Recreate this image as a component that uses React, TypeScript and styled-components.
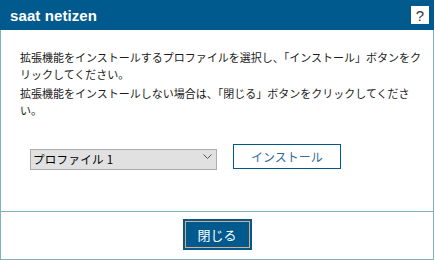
import { FC } from 'react';
import styled, { createGlobalStyle } from 'styled-components';

const GlobalStyle = createGlobalStyle`
  html, body {
    margin: 0;
    padding: 0;
    background: #ffffff;
  }
`;

const jpFont = `'Noto Sans CJK JP', 'Noto Sans', sans-serif`;

const Dialog = styled.div`
  display: flex;
  flex-direction: column;
  width: 434px;
  height: 260px;
  font-family: ${jpFont};
  color: #1a1a1a;
`;

const TitleBar = styled.div`
  display: flex;
  align-items: center;
  justify-content: space-between;
  height: 30px;
  padding: 0 5px 0 10px;
  background: #005a8e;
`;

const Title = styled.div`
  font-family: 'Liberation Sans', Arial, sans-serif;
  font-weight: bold;
  font-size: 15px;
  color: #ffffff;
  letter-spacing: 0.1px;
`;

const HelpButton = styled.div`
  display: flex;
  align-items: center;
  justify-content: center;
  width: 18px;
  height: 18px;
  background: #ffffff;
  color: #333333;
  font-family: 'Liberation Sans', Arial, sans-serif;
  font-size: 15px;
`;

const Body = styled.div`
  flex-grow: 1;
  border-left: 1px solid #7fb1b6;
  border-right: 1px solid #7fb1b6;
  padding: 19px 2px 0 19px;
`;

const Message = styled.p`
  margin: 0 0 2px 0;
  font-size: 11px;
  line-height: 17px;
  white-space: nowrap;
`;

const Controls = styled.div`
  display: flex;
  align-items: center;
  gap: 16px;
  margin: 23px 0 0 10px;
`;

const SelectBox = styled.div`
  position: relative;
  width: 187px;
  height: 21px;
`;

const Select = styled.select`
  appearance: none;
  width: 100%;
  height: 100%;
  margin: 0;
  padding: 0 0 0 2px;
  border: 1px solid #adadad;
  border-radius: 0;
  background: #e1e1e1;
  color: #000000;
  font-family: ${jpFont};
  font-size: 11.5px;
  letter-spacing: 0.3px;
  outline: none;
`;

const Chevron = styled.svg`
  position: absolute;
  right: 5px;
  top: 9px;
  pointer-events: none;
`;

const InstallButton = styled.button`
  width: 108px;
  height: 25px;
  margin: 2px 0 0 0;
  padding: 0;
  border: 1px solid #005a8e;
  background: #ffffff;
  color: #2f6d9b;
  font-family: ${jpFont};
  font-size: 12px;
`;

const Footer = styled.div`
  display: flex;
  justify-content: center;
  align-items: flex-start;
  height: 40px;
  padding-top: 7px;
  border: 1px solid #7fb1b6;
`;

const CloseButton = styled.button`
  width: 69px;
  height: 31px;
  margin: 0;
  padding: 0;
  border: none;
  background: #005a8e;
  box-shadow: inset 0 0 0 2px #005a8e, inset 0 0 0 3px #e3aa86;
  color: #ffffff;
  font-family: ${jpFont};
  font-size: 13px;
`;

const App: FC = () => {
  return (
    <>
      <GlobalStyle />
      <Dialog>
        <TitleBar>
          <Title>saat netizen</Title>
          <HelpButton>?</HelpButton>
        </TitleBar>
        <Body>
          <Message>
            拡張機能をインストールするプロファイルを選択し、「インストール」ボタンをク
            <br />
            リックしてください。
          </Message>
          <Message>
            拡張機能をインストールしない場合は、「閉じる」ボタンをクリックしてくださ
            <br />
            い。
          </Message>
          <Controls>
            <SelectBox>
              <Select defaultValue="1">
                <option value="1">プロファイル 1</option>
              </Select>
              <Chevron width="9" height="5" viewBox="0 0 9 5">
                <path d="M0.5 0.5 L4.5 4.5 L8.5 0.5" fill="none" stroke="#555" strokeWidth="1" />
              </Chevron>
            </SelectBox>
            <InstallButton>インストール</InstallButton>
          </Controls>
        </Body>
        <Footer>
          <CloseButton>閉じる</CloseButton>
        </Footer>
      </Dialog>
    </>
  );
};

export default App;
